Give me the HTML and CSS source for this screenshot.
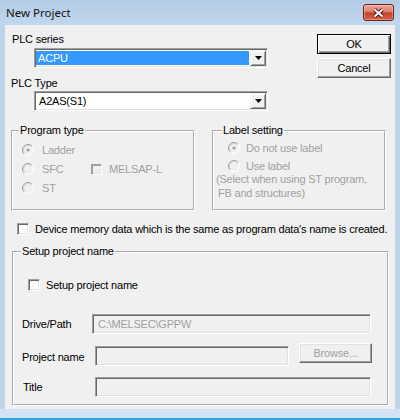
FILE: index.html
```html
<!DOCTYPE html>
<html>
<head>
<meta charset="utf-8">
<link rel="stylesheet" href="styles.css">
</head>
<body>
<div class="window">
  <div class="titlebar">
    <span class="title">New Project</span>
    <div class="close">
      <svg width="13" height="10" viewBox="0 0 13 10"><path d="M2.5 1.5L10.5 8.5M10.5 1.5L2.5 8.5" stroke="#4a1208" stroke-width="3.8"/><path d="M2.5 1.5L10.5 8.5M10.5 1.5L2.5 8.5" stroke="#fff" stroke-width="2"/></svg>
    </div>
  </div>
  <div class="client">
    <div class="top">
      <div class="selectors">
        <div class="lbl lbl-series">PLC series</div>
        <div class="combo combo-series">
          <div class="combo-value"><span class="hl">ACPU</span></div>
          <div class="combo-btn"><svg width="7" height="4" viewBox="0 0 7 4"><path d="M0 0H7L3.5 4Z" fill="#000"/></svg></div>
        </div>
        <div class="lbl lbl-type">PLC Type</div>
        <div class="combo combo-type">
          <div class="combo-value plain">A2AS(S1)</div>
          <div class="combo-btn"><svg width="7" height="4" viewBox="0 0 7 4"><path d="M0 0H7L3.5 4Z" fill="#000"/></svg></div>
        </div>
      </div>
      <div class="actions">
        <div class="btn btn-default">OK</div>
        <div class="btn">Cancel</div>
      </div>
    </div>

    <div class="groups">
      <fieldset class="group group-program">
        <legend>Program type</legend>
        <div class="opt-row">
          <svg class="radio" width="12" height="12" viewBox="0 0 12 12"><circle cx="6" cy="6" r="5" fill="#f0f0f0"/><path d="M2.11 9.89A5.5 5.5 0 0 1 9.89 2.11" fill="none" stroke="#a0a0a0"/><path d="M9.89 2.11A5.5 5.5 0 0 1 2.11 9.89" fill="none" stroke="#fff"/><path d="M2.82 9.18A4.5 4.5 0 0 1 9.18 2.82" fill="none" stroke="#d0d0d0"/><circle cx="6" cy="6" r="1.6" fill="#a0a0a0"/></svg>
          <span class="dis">Ladder</span>
        </div>
        <div class="opt-row">
          <svg class="radio" width="12" height="12" viewBox="0 0 12 12"><circle cx="6" cy="6" r="5" fill="#f0f0f0"/><path d="M2.11 9.89A5.5 5.5 0 0 1 9.89 2.11" fill="none" stroke="#a0a0a0"/><path d="M9.89 2.11A5.5 5.5 0 0 1 2.11 9.89" fill="none" stroke="#fff"/><path d="M2.82 9.18A4.5 4.5 0 0 1 9.18 2.82" fill="none" stroke="#d0d0d0"/></svg>
          <span class="dis sfc">SFC</span>
          <span class="check check-dis"></span>
          <span class="dis">MELSAP-L</span>
        </div>
        <div class="opt-row">
          <svg class="radio" width="12" height="12" viewBox="0 0 12 12"><circle cx="6" cy="6" r="5" fill="#f0f0f0"/><path d="M2.11 9.89A5.5 5.5 0 0 1 9.89 2.11" fill="none" stroke="#a0a0a0"/><path d="M9.89 2.11A5.5 5.5 0 0 1 2.11 9.89" fill="none" stroke="#fff"/><path d="M2.82 9.18A4.5 4.5 0 0 1 9.18 2.82" fill="none" stroke="#d0d0d0"/></svg>
          <span class="dis">ST</span>
        </div>
      </fieldset>

      <fieldset class="group group-label">
        <legend>Label setting</legend>
        <div class="opt-row">
          <svg class="radio" width="12" height="12" viewBox="0 0 12 12"><circle cx="6" cy="6" r="5" fill="#f0f0f0"/><path d="M2.11 9.89A5.5 5.5 0 0 1 9.89 2.11" fill="none" stroke="#a0a0a0"/><path d="M9.89 2.11A5.5 5.5 0 0 1 2.11 9.89" fill="none" stroke="#fff"/><path d="M2.82 9.18A4.5 4.5 0 0 1 9.18 2.82" fill="none" stroke="#d0d0d0"/><circle cx="6" cy="6" r="1.6" fill="#a0a0a0"/></svg>
          <span class="dis">Do not use label</span>
        </div>
        <div class="opt-row">
          <svg class="radio" width="12" height="12" viewBox="0 0 12 12"><circle cx="6" cy="6" r="5" fill="#f0f0f0"/><path d="M2.11 9.89A5.5 5.5 0 0 1 9.89 2.11" fill="none" stroke="#a0a0a0"/><path d="M9.89 2.11A5.5 5.5 0 0 1 2.11 9.89" fill="none" stroke="#fff"/><path d="M2.82 9.18A4.5 4.5 0 0 1 9.18 2.82" fill="none" stroke="#d0d0d0"/></svg>
          <span class="dis">Use label</span>
        </div>
        <div class="note dis">
          <div class="note-line">(Select when using ST program,</div>
          <div class="note-line note-indent">FB and structures)</div>
        </div>
      </fieldset>
    </div>

    <div class="device">
      <span class="check"></span>
      <span>Device memory data which is the same as program data's name is created.</span>
    </div>

    <fieldset class="group group-setup">
      <legend>Setup project name</legend>
      <div class="setup-check">
        <span class="check"></span>
        <span>Setup project name</span>
      </div>
      <div class="field-row row-path">
        <span class="field-lbl lbl-path">Drive/Path</span>
        <div class="input input-path">C:\MELSEC\GPPW</div>
      </div>
      <div class="field-row row-project">
        <span class="field-lbl lbl-project">Project name</span>
        <div class="input input-project"></div>
        <div class="btn btn-disabled btn-browse">Browse...</div>
      </div>
      <div class="field-row row-title">
        <span class="field-lbl lbl-title">Title</span>
        <div class="input input-title"></div>
      </div>
    </fieldset>
  </div>
  <div class="frame-bottom"></div>
</div>
</body>
</html>
```

FILE: styles.css
```css
body {
  margin: 0;
}

.window {
  width: 400px;
  height: 420px;
  display: flex;
  flex-direction: column;
  background: #bdd4eb;
  font: 11px "Liberation Sans", Arial, sans-serif;
  letter-spacing: -0.2px;
  color: #000;
  overflow: hidden;
}

/* Title bar */
.titlebar {
  height: 25px;
  flex: none;
  box-sizing: border-box;
  display: flex;
  justify-content: space-between;
  align-items: flex-start;
  padding: 0 6px;
  background: linear-gradient(#b3cbe5, #c2d7ed);
}

.title {
  font: 11.5px "Noto Sans", sans-serif;
  letter-spacing: 0;
  line-height: 16px;
  margin-top: 5px;
  color: #111;
}

.close {
  width: 31px;
  height: 17px;
  margin-top: 4px;
  box-sizing: border-box;
  border: 1px solid #6e2417;
  border-radius: 3px;
  background: linear-gradient(#eaa99a 0%, #dc806b 45%, #c5432b 52%, #d0634a 100%);
  box-shadow: inset 0 0 0 1px rgba(255, 255, 255, 0.3);
  display: flex;
  align-items: center;
  justify-content: center;
}

/* Client area */
.client {
  flex: none;
  height: 384px;
  margin: 0 5px;
  box-sizing: border-box;
  background: #f0f0f0;
  padding-top: 8px;
}

.frame-bottom {
  flex: 1;
  background: #d2e3f3;
  border-bottom: 2px solid #2ea6d6;
}

.top {
  display: flex;
  justify-content: space-between;
}

.selectors {
  display: flex;
  flex-direction: column;
  align-items: flex-start;
}

.lbl {
  line-height: 13px;
}

.lbl-series {
  margin-left: 7px;
}

.lbl-type {
  margin: 9px 0 0 6px;
}

.combo {
  width: 234px;
  height: 20px;
  box-sizing: border-box;
  margin-left: 29px;
  display: flex;
  padding: 1px;
  background: #fff;
  border: 1px solid;
  border-color: #a0a0a0 #fff #fff #a0a0a0;
  box-shadow: inset 1px 1px #696969, inset -1px -1px #e3e3e3;
}

.combo-series {
  margin-top: 2px;
}

.combo-type {
  margin-top: 1px;
}

.combo-value {
  flex: 1;
  display: flex;
}

.combo-value.plain {
  padding-left: 3px;
  line-height: 16px;
}

.hl {
  flex: 1;
  margin: 1px 1px 1px 0;
  padding-left: 2px;
  background: #3399ff;
  color: #fff;
  line-height: 14px;
}

.combo-btn {
  width: 16px;
  height: 16px;
  box-sizing: border-box;
  background: #f0f0f0;
  border: 1px solid;
  border-color: #f0f0f0 #696969 #696969 #f0f0f0;
  box-shadow: inset 1px 1px #fff, inset -1px -1px #a0a0a0;
  display: flex;
  align-items: center;
  justify-content: center;
}

.actions {
  display: flex;
  flex-direction: column;
  gap: 4px;
  margin: 1px 4px 0 0;
}

.btn {
  width: 74px;
  height: 20px;
  box-sizing: border-box;
  display: flex;
  align-items: center;
  justify-content: center;
  background: #f0f0f0;
  border: 1px solid;
  border-color: #fff #696969 #696969 #fff;
  box-shadow: inset -1px -1px #a0a0a0, inset 1px 1px #e3e3e3;
}

.btn-default {
  border-color: #000;
  box-shadow: inset 1px 1px #fff, inset -1px -1px #696969, inset -2px -2px #a0a0a0;
}

.btn-disabled {
  color: #a0a0a0;
}

/* Group boxes */
.groups {
  display: flex;
  margin-top: 13px;
}

.group {
  margin: 0;
  box-sizing: border-box;
  border: 2px groove #fff;
  padding: 0;
  min-width: 0;
}

.group legend {
  padding: 0 1px;
  line-height: 13px;
}

.group-program {
  width: 184px;
  margin-left: 6px;
  padding: 3.5px 0 11.5px 9px;
}

.group-program legend {
  margin-left: -3px;
}

.group-label {
  width: 174px;
  margin-left: 17px;
  padding: 1.5px 0 9px 0;
}

.group-label legend {
  margin-left: 8px;
}

.opt-row {
  display: flex;
  align-items: center;
  height: 19px;
}

.group-program .radio {
  margin-right: 8px;
}

.group-label .opt-row {
  height: 18px;
  padding-left: 14px;
}

.group-label .radio {
  margin-right: 6px;
}

.radio {
  flex: none;
}

.dis {
  color: #a0a0a0;
}

.sfc {
  width: 49px;
}

.note {
  margin-top: -2.5px;
  padding-left: 2px;
}

.note-line {
  line-height: 14px;
}

.note-indent {
  padding-left: 2px;
}

/* Check boxes */
.check {
  flex: none;
  width: 12px;
  height: 12px;
  box-sizing: border-box;
  background: #fff;
  border: 1px solid;
  border-color: #a0a0a0 #fff #fff #a0a0a0;
  box-shadow: inset 1px 1px #696969, inset -1px -1px #e3e3e3;
}

.check-dis {
  width: 11px;
  height: 11px;
  background: #f0f0f0;
  box-shadow: inset 1px 1px #a0a0a0, inset -1px -1px #e3e3e3;
  margin-right: 7px;
}

.device {
  display: flex;
  align-items: center;
  gap: 6px;
  height: 13px;
  margin: 11.5px 0 0 12px;
}

/* Setup project name */
.group-setup {
  width: 377px;
  margin: 9.5px 0 0 7px;
  padding: 20px 0 6.5px 0;
}

.group-setup legend {
  margin-left: 7px;
}

.setup-check {
  display: flex;
  align-items: center;
  gap: 6px;
  height: 13px;
  margin-left: 14px;
}

.field-row {
  display: flex;
  padding-left: 8px;
}

.field-lbl {
  line-height: 13px;
  flex: none;
}

.row-path {
  margin-top: 23px;
  align-items: center;
}

.lbl-path {
  width: 70px;
}

.row-project {
  margin-top: 9px;
  align-items: flex-start;
}

.lbl-project {
  width: 73px;
  margin-top: 8px;
}

.row-title {
  margin-top: 11px;
  align-items: center;
}

.lbl-title {
  width: 72px;
  padding-left: 1px;
}

.input {
  height: 20px;
  box-sizing: border-box;
  background: #f0f0f0;
  border: 1px solid;
  border-color: #a0a0a0 #fff #fff #a0a0a0;
  box-shadow: inset 1px 1px #696969, inset -1px -1px #e3e3e3;
  padding-left: 5px;
  line-height: 18px;
  color: #a0a0a0;
}

.input-path {
  width: 279px;
}

.input-project {
  width: 194px;
  margin-top: 3px;
}

.btn-browse {
  width: 73px;
  margin-left: 10px;
}

.input-title {
  width: 276px;
}
```
